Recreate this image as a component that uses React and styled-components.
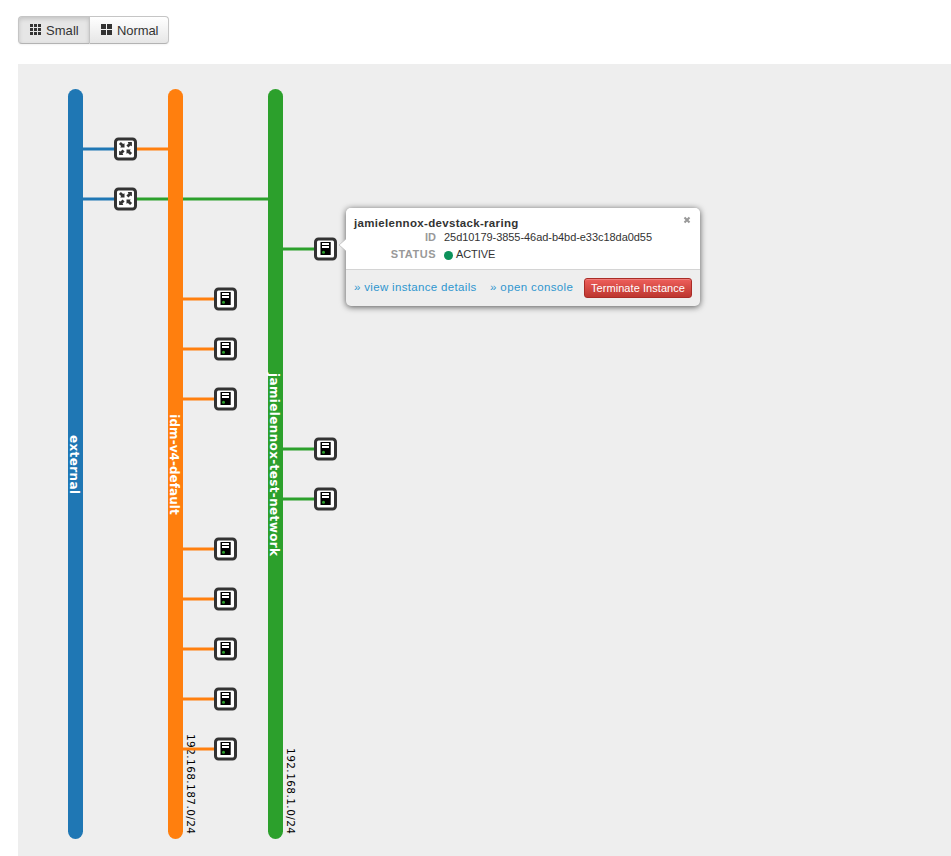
import React from "react";
import styled, { createGlobalStyle, css } from "styled-components";

const GlobalStyle = createGlobalStyle`
  * { box-sizing: border-box; }
  html, body { margin: 0; background: #fff; overflow: hidden; }
  body { font-family: "Liberation Sans", Arial, sans-serif; font-size: 13px; color: #333; }
`;

const Page = styled.main`
  height: 856px;
  padding: 16px 0 0 18px;
  display: flex;
  flex-direction: column;
  gap: 20px;
`;

const ButtonGroup = styled.div`
  display: flex;
  height: 28px;
`;

const SizeButton = styled.button`
  display: flex;
  align-items: center;
  gap: 4px;
  width: ${(p) => p.$width}px;
  padding: 0 0 0 11px;
  border: 1px solid #c5c5c5;
  border-bottom-color: #b3b3b3;
  border-radius: 0 4px 4px 0;
  background: linear-gradient(#fff, #e6e6e6);
  box-shadow: inset 0 1px 0 rgba(255, 255, 255, 0.2), 0 1px 2px rgba(0, 0, 0, 0.05);
  color: #333;
  font: 13px "Liberation Sans", Arial, sans-serif;
  letter-spacing: ${(p) => p.$spacing}px;
  white-space: nowrap;
  ${(p) => p.$active && css`
    border-radius: 4px 0 0 4px;
    border-right: 0;
    background: #e6e6e6;
    box-shadow: inset 0 2px 4px rgba(0, 0, 0, 0.15), 0 1px 2px rgba(0, 0, 0, 0.05);
  `}
`;

const ButtonIcon = styled.svg`
  flex: none;
  width: 12px;
  height: 12px;
  margin-top: -1px;
`;

const Canvas = styled.section`
  position: relative;
  flex: 1;
  background: #eee;
`;

const Diagram = styled.svg`
  display: block;
  width: 933px;
  height: 792px;
`;

const NetworkName = styled.text`
  font: bold 12px "DejaVu Sans", sans-serif;
  fill: #fff;
  text-anchor: middle;
`;

const Cidr = styled.text`
  font: 10.5px "DejaVu Sans", sans-serif;
  fill: #000;
  text-anchor: end;
`;

const Balloon = styled.aside`
  position: absolute;
  left: 328px;
  top: 144px;
  width: 354px;
  height: 98px;
  border-radius: 5px;
  background: #eee;
  box-shadow: 0 1px 6px rgba(0, 0, 0, 0.65);
`;

const Arrow = styled.svg`
  position: absolute;
  left: -8px;
  top: 30px;
  width: 9px;
  height: 14px;
`;

const BalloonHead = styled.div`
  height: 62px;
  padding: 8px 9px 0 8px;
  border-bottom: 1px solid #d4d4d4;
  border-radius: 5px 5px 0 0;
  background: #fff;
`;

const TitleRow = styled.header`
  display: flex;
  justify-content: space-between;
  height: 13px;
`;

const Title = styled.h3`
  margin: 0;
  font-size: 11.5px;
  line-height: 15px;
  letter-spacing: 0.32px;
`;

const CloseIcon = styled.svg`
  width: 8px;
  height: 8px;
`;

const Details = styled.dl`
  display: grid;
  grid-template-columns: 82px auto;
  grid-auto-rows: 17px;
  column-gap: 8px;
  margin: 0;
  font-size: 11px;
  line-height: 17px;
`;

const Term = styled.dt`
  color: #999;
  font-weight: bold;
  text-align: right;
  letter-spacing: ${(p) => p.$spacing}px;
`;

const Value = styled.dd`
  display: flex;
  align-items: center;
  gap: 3px;
  margin: 0;
  white-space: nowrap;
  letter-spacing: ${(p) => p.$spacing}px;
`;

const StatusDot = styled.span`
  width: 9px;
  height: 9px;
  margin-top: 2px;
  border-radius: 50%;
  background: #0d925b;
`;

const Actions = styled.footer`
  display: flex;
  height: 36px;
  padding: 8px 8px 0;
`;

const ActionLink = styled.a`
  width: ${(p) => p.$width}px;
  color: #2f96cf;
  font-size: 11.5px;
  line-height: 18px;
  letter-spacing: ${(p) => p.$spacing}px;
  white-space: nowrap;
`;

const DangerButton = styled.button`
  width: 108px;
  height: 20px;
  padding: 0;
  border: 1px solid #a92c27;
  border-radius: 3px;
  background: linear-gradient(#ee5f5b, #bd362f);
  box-shadow: inset 0 1px 0 rgba(255, 255, 255, 0.2);
  color: #fff;
  font: 11px "Liberation Sans", Arial, sans-serif;
  letter-spacing: 0.06px;
  white-space: nowrap;
`;

const BLUE = "#1f77b4";
const ORANGE = "#ff7f0e";
const GREEN = "#2ca02c";

const networks = [
  { x: 50, color: BLUE, name: "external", length: 59 },
  { x: 150, color: ORANGE, name: "idm-v4-default", length: 100.5 },
  { x: 250, color: GREEN, name: "jamielennox-test-network", length: 183 },
];

const subnets = [
  { x: 169, cidr: "192.168.187.0/24", length: 100 },
  { x: 269, cidr: "192.168.1.0/24", length: 86 },
];

const routers = [
  { y: 85, color: ORANGE, to: 150 },
  { y: 135, color: GREEN, to: 250 },
];

const servers = [
  ...[235, 285, 335, 485, 535, 585, 635, 685].map((y) => ({ x: 165, y, color: ORANGE })),
  ...[185, 385, 435].map((y) => ({ x: 265, y, color: GREEN })),
];

const NodeBox = () => (
  <rect x="-10" y="-10" width="20" height="20" rx="3" fill="#fff" stroke="#333" strokeWidth="3" />
);

const INWARD = "M1 1H5.2L4.4 2.4L6.6 4.6L4.6 6.6L2.4 4.4L1 5.2Z";
const OUTWARD = "M6.4 6.4H2.2L3 5L0.9 2.9L2.9 0.9L5 3L6.4 2.2Z";

const RouterNode = ({ y }) => (
  <g transform={`translate(107.5 ${y})`}>
    <NodeBox />
    <g transform="translate(0 -0.5)" fill="#333">
      <path d={INWARD} />
      <path d={INWARD} transform="scale(-1 -1)" />
      <path d={OUTWARD} transform="scale(1 -1)" />
      <path d={OUTWARD} transform="scale(-1 1)" />
    </g>
  </g>
);

const ServerNode = ({ x, y }) => (
  <g transform={`translate(${x} ${y})`}>
    <NodeBox />
    <rect x="-5" y="-7" width="10.2" height="13" fill="#000" />
    <path d="M-3.5 -5H3.5M-3.5 -2H3.5" stroke="#fff" strokeWidth="2" />
    <circle cx="-2" cy="3.3" r="1.5" fill="#2ca02c" />
  </g>
);

function Topology() {
  return (
    <Diagram viewBox="0 0 933 792">
      {subnets.map((s) => (
        <Cidr key={s.cidr} transform={`translate(${s.x} 770) rotate(90)`} textLength={s.length}>{s.cidr}</Cidr>
      ))}
      {routers.map((r) => (
        <g key={r.y} strokeWidth="3">
          <path d={`M65 ${r.y}H107`} stroke={BLUE} />
          <path d={`M107 ${r.y}H${r.to}`} stroke={r.color} />
        </g>
      ))}
      {servers.map((s) => (
        <path key={`${s.x}-${s.y}`} d={`M${s.x} ${s.y}h40`} stroke={s.color} strokeWidth="3" />
      ))}
      {networks.map((n) => (
        <g key={n.name}>
          <rect x={n.x} y="25" width="15" height="750" rx="7.5" fill={n.color} />
          <NetworkName transform={`translate(${n.x + 2} 400.5) rotate(90)`} textLength={n.length}>{n.name}</NetworkName>
        </g>
      ))}
      {routers.map((r) => <RouterNode key={r.y} y={r.y} />)}
      {servers.map((s) => <ServerNode key={`${s.x}-${s.y}`} x={s.x + 42.5} y={s.y} />)}
    </Diagram>
  );
}

function InstanceBalloon() {
  return (
    <Balloon>
      <Arrow viewBox="0 0 9 14">
        <path d="M9 0L1 7L9 14Z" fill="#fff" />
        <path d="M8 1L1 7L8 13" fill="none" stroke="#bbb" strokeWidth="0.8" />
      </Arrow>
      <BalloonHead>
        <TitleRow>
          <Title>jamielennox-devstack-raring</Title>
          <CloseIcon viewBox="0 0 8 8">
            <path d="M1.5 1.5L6.5 6.5M6.5 1.5L1.5 6.5" stroke="#999" strokeWidth="2.1" />
          </CloseIcon>
        </TitleRow>
        <Details>
          <Term $spacing={0}>ID</Term>
          <Value $spacing={-0.05}>25d10179-3855-46ad-b4bd-e33c18da0d55</Value>
          <Term $spacing={0.5}>STATUS</Term>
          <Value $spacing={-0.1}><StatusDot />ACTIVE</Value>
        </Details>
      </BalloonHead>
      <Actions>
        <ActionLink $width={136} $spacing={0.33}>» view instance details</ActionLink>
        <ActionLink $width={94} $spacing={0.38}>» open console</ActionLink>
        <DangerButton>Terminate Instance</DangerButton>
      </Actions>
    </Balloon>
  );
}

export default function App() {
  return (
    <Page>
      <GlobalStyle />
      <ButtonGroup>
        <SizeButton $active $width={71} $spacing={0.05}>
          <ButtonIcon viewBox="0 0 12 12">
            <path d="M0 0h3v3H0zM4 0h3v3H4zM8 0h3v3H8zM0 4h3v3H0zM4 4h3v3H4zM8 4h3v3H8zM0 8h3v3H0zM4 8h3v3H4zM8 8h3v3H8z" fill="#333" />
          </ButtonIcon>
          Small
        </SizeButton>
        <SizeButton $width={80} $spacing={-0.1}>
          <ButtonIcon viewBox="0 0 12 12">
            <path d="M0 0h5v5H0zM6 0h5v5H6zM0 6h5v5H0zM6 6h5v5H6z" fill="#333" />
          </ButtonIcon>
          Normal
        </SizeButton>
      </ButtonGroup>
      <Canvas>
        <Topology />
        <InstanceBalloon />
      </Canvas>
    </Page>
  );
}
